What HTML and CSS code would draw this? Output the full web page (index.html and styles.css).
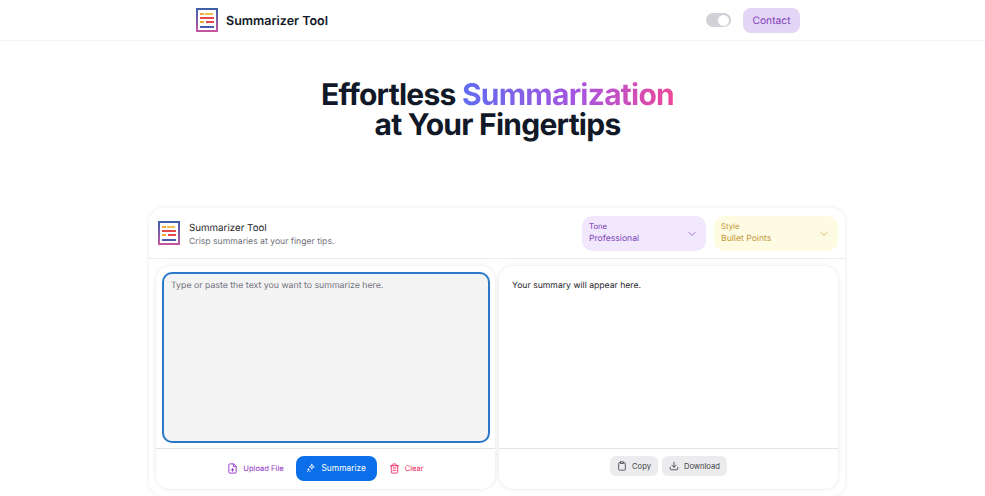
FILE: index.html
```html
<!DOCTYPE html>
<html lang="en">
<head>
    <meta charset="UTF-8">
    <meta name="viewport" content="width=device-width, initial-scale=1.0">
    <title>Summarizer Tool</title>
    <link rel="stylesheet" href="styles.css">
</head>
<body>
    <header class="topbar">
        <div class="topbar-inner">
            <div class="brand">
                <svg class="logo" viewBox="0 0 22 24" width="22" height="24">
                    <defs>
                        <linearGradient id="logoEdge" x1="0" y1="0" x2="0" y2="1">
                            <stop offset="0" stop-color="#3f5fa8"/>
                            <stop offset="1" stop-color="#c2569f"/>
                        </linearGradient>
                    </defs>
                    <rect x="1" y="1" width="20" height="22" fill="#fff" stroke="url(#logoEdge)" stroke-width="2"/>
                    <rect x="4" y="5" width="4" height="2" fill="#f0a93c"/>
                    <rect x="9" y="5" width="8" height="2" fill="#f0c04c"/>
                    <rect x="4" y="9" width="14" height="2" fill="#e5484d"/>
                    <rect x="4" y="13" width="4" height="2" fill="#f0a93c"/>
                    <rect x="10" y="13" width="8" height="2" fill="#e5484d"/>
                    <rect x="4" y="18" width="14" height="2" fill="#4a5bb0"/>
                </svg>
                <span class="brand-name">Summarizer Tool</span>
            </div>
            <div class="topbar-actions">
                <span class="toggle"><span class="knob"></span></span>
                <a class="contact" href="#">Contact</a>
            </div>
        </div>
    </header>

    <section class="hero">
        <h1>Effortless <span class="grad">Summarization</span><br>at Your Fingertips</h1>
    </section>

    <main class="card">
        <div class="card-head">
            <svg class="logo" viewBox="0 0 22 24" width="22" height="24">
                <rect x="1" y="1" width="20" height="22" fill="#fff" stroke="url(#logoEdge)" stroke-width="2"/>
                <rect x="4" y="5" width="4" height="2" fill="#f0a93c"/>
                <rect x="9" y="5" width="8" height="2" fill="#f0c04c"/>
                <rect x="4" y="9" width="14" height="2" fill="#e5484d"/>
                <rect x="4" y="13" width="4" height="2" fill="#f0a93c"/>
                <rect x="10" y="13" width="8" height="2" fill="#e5484d"/>
                <rect x="4" y="18" width="14" height="2" fill="#4a5bb0"/>
            </svg>
            <div class="card-title">
                <div class="title">Summarizer Tool</div>
                <div class="sub">Crisp summaries at your finger tips.</div>
            </div>
            <div class="selects">
                <div class="select tone">
                    <div>
                        <div class="select-label">Tone</div>
                        <div class="select-value">Professional</div>
                    </div>
                    <svg class="chev" viewBox="0 0 24 24" width="12" height="12"><path d="M6 9l6 6 6-6"/></svg>
                </div>
                <div class="select style">
                    <div>
                        <div class="select-label">Style</div>
                        <div class="select-value">Bullet Points</div>
                    </div>
                    <svg class="chev" viewBox="0 0 24 24" width="12" height="12"><path d="M6 9l6 6 6-6"/></svg>
                </div>
            </div>
        </div>

        <div class="panels">
            <div class="panel">
                <div class="panel-body input-body">
                    <div class="textbox">Type or paste the text you want to summarize here.</div>
                </div>
                <div class="panel-foot">
                    <a class="link upload" href="#">
                        <svg class="ico" viewBox="0 0 24 24" width="11" height="11"><path d="M14 2H6a2 2 0 0 0-2 2v16a2 2 0 0 0 2 2h12a2 2 0 0 0 2-2V8z"/><path d="M14 2v6h6"/><path d="M12 18v-6M9 15h6"/></svg>
                        Upload File
                    </a>
                    <button class="primary">
                        <svg class="ico" viewBox="0 0 24 24" width="10" height="10"><path d="M14 3l1.500 4.500L20 9l-4.500 1.500L14 15l-1.500-4.500L8 9l4.500-1.500z"/><path d="M6 14v4M4 16h4"/><path d="M3 21l1-1M10 21l-1-1"/></svg>
                        Summarize
                    </button>
                    <a class="link clear" href="#">
                        <svg class="ico" viewBox="0 0 24 24" width="11" height="11"><path d="M3 6h18"/><path d="M19 6v14a2 2 0 0 1-2 2H7a2 2 0 0 1-2-2V6"/><path d="M8 6V4a2 2 0 0 1 2-2h4a2 2 0 0 1 2 2v2"/><path d="M9 11h6M9 16h6"/></svg>
                        Clear
                    </a>
                </div>
            </div>
            <div class="panel">
                <div class="panel-body output-body">Your summary will appear here.</div>
                <div class="panel-foot">
                    <button class="grey">
                        <svg class="ico" viewBox="0 0 24 24" width="10" height="10"><rect x="8" y="2" width="8" height="4" rx="1"/><path d="M16 4h2a2 2 0 0 1 2 2v14a2 2 0 0 1-2 2H6a2 2 0 0 1-2-2V6a2 2 0 0 1 2-2h2"/></svg>
                        Copy
                    </button>
                    <button class="grey">
                        <svg class="ico" viewBox="0 0 24 24" width="10" height="10"><path d="M21 15v4a2 2 0 0 1-2 2H5a2 2 0 0 1-2-2v-4"/><path d="M7 10l5 5 5-5"/><path d="M12 15V3"/></svg>
                        Download
                    </button>
                </div>
            </div>
        </div>
    </main>
</body>
</html>
```

FILE: styles.css
```css
* {
    box-sizing: border-box;
}
html, body {
    height: 496px;
    overflow: hidden;
}
body {
    margin: 0;
    font-family: Inter, "Liberation Sans", sans-serif;
    background: #fff;
    color: #111827;
    text-rendering: geometricPrecision;
}
.topbar {
    height: 41px;
    border-bottom: 1px solid #f3f3f5;
}
.topbar-inner {
    width: 604px;
    margin-left: 196px;
    height: 40px;
    display: flex;
    align-items: center;
    justify-content: space-between;
}
.brand {
    display: flex;
    align-items: center;
    gap: 8px;
}
.brand-name {
    font-size: 12.5px;
    font-weight: 600;
    color: #111827;
    padding-top: 2px;
}
.logo {
    flex: none;
}
.topbar-actions {
    display: flex;
    align-items: center;
    gap: 12px;
}
.toggle {
    width: 25px;
    height: 14px;
    border-radius: 7px;
    background: #cfd1d6;
    display: flex;
    justify-content: flex-end;
    align-items: center;
    padding: 0 2px;
}
.knob {
    width: 11px;
    height: 11px;
    border-radius: 50%;
    background: #fff;
}
.contact {
    width: 57px;
    height: 25px;
    padding-top: 1px;
    border-radius: 8px;
    background: #e3d5f6;
    color: #7e3fb8;
    font-size: 10.25px;
    display: flex;
    align-items: center;
    justify-content: center;
    text-decoration: none;
}
.hero {
    padding: 39px 0 0 10px;
    height: 167px;
    text-align: center;
}
.hero h1 {
    margin: 0;
    font-size: 30px;
    line-height: 30px;
    font-weight: 700;
    letter-spacing: -0.75px;
    color: #111827;
}
.grad {
    background: linear-gradient(90deg, #5f6cf0, #a855e0 55%, #ec4899);
    -webkit-background-clip: text;
    background-clip: text;
    color: transparent;
}
.card {
    width: 696px;
    height: 288px;
    margin-left: 149px;
    background: #fff;
    border-radius: 14px;
    box-shadow: 0 0 5px rgba(0,0,0,0.09);
}
.card-head {
    height: 51px;
    padding: 0 7px 0 9px;
    display: flex;
    align-items: center;
    border-bottom: 1px solid #ececee;
}
.card-title {
    margin-left: 9px;
    padding-top: 4px;
}
.title {
    font-size: 9.75px;
    line-height: 14px;
    color: #27272a;
}
.sub {
    font-size: 8.65px;
    line-height: 13px;
    color: #71717a;
}
.selects {
    margin-left: auto;
    display: flex;
    gap: 8px;
}
.select {
    width: 124px;
    height: 35px;
    border-radius: 10px;
    padding: 0 8px 0 7px;
    display: flex;
    align-items: center;
    justify-content: space-between;
}
.tone {
    background: #f1e8fd;
    color: #7e3fb8;
}
.style {
    background: #fefbe3;
    color: #c2963a;
}
.select-label {
    font-size: 7.75px;
    line-height: 13px;
}
.select-value {
    font-size: 8.65px;
    line-height: 13px;
}
.chev {
    fill: none;
    stroke: currentColor;
    stroke-width: 2;
    stroke-linecap: round;
    stroke-linejoin: round;
    opacity: 0.7;
    margin-top: 2px;
}
.panels {
    padding: 7px 7px 0;
    display: flex;
    gap: 4px;
}
.panel {
    flex: 1;
    height: 223px;
    border-radius: 14px;
    background: #fff;
    box-shadow: 0 0 4px rgba(0,0,0,0.11);
    display: flex;
    flex-direction: column;
}
.panel-body {
    height: 183px;
    border-bottom: 1px solid #e4e4e7;
}
.input-body {
    padding: 6px 5px 5px 6px;
}
.textbox {
    height: 100%;
    background: #f4f4f5;
    border: 2px solid #2a78c8;
    border-radius: 10px;
    padding: 4px 7px;
    font-size: 8.75px;
    line-height: 16px;
    color: #71717a;
}
.output-body {
    padding: 12px 13px;
    font-size: 8.65px;
    line-height: 16px;
    color: #27272a;
}
.panel-foot {
    flex: 1;
    padding-bottom: 2px;
    display: flex;
    align-items: center;
    justify-content: center;
    gap: 4px;
}
.ico {
    fill: none;
    stroke: currentColor;
    stroke-width: 2;
    stroke-linecap: round;
    stroke-linejoin: round;
    flex: none;
}
.link {
    display: flex;
    align-items: center;
    gap: 5px;
    font-size: 7.6px;
    text-decoration: none;
    padding: 0 8px;
}
.upload {
    color: #9333c4;
}
.clear {
    color: #ee2f68;
}
button {
    font-family: inherit;
    border: none;
    display: flex;
    align-items: center;
}
.primary {
    width: 81px;
    height: 25px;
    border-radius: 8px;
    background: #0a6fe8;
    color: #fff;
    font-size: 8.4px;
    gap: 5px;
    justify-content: center;
    padding: 0;
}
.grey {
    height: 20px;
    margin-bottom: 4px;
    border-radius: 6px;
    background: #ececee;
    color: #3f3f46;
    font-size: 7.6px;
    gap: 5px;
    padding: 0 7px;
}
```
